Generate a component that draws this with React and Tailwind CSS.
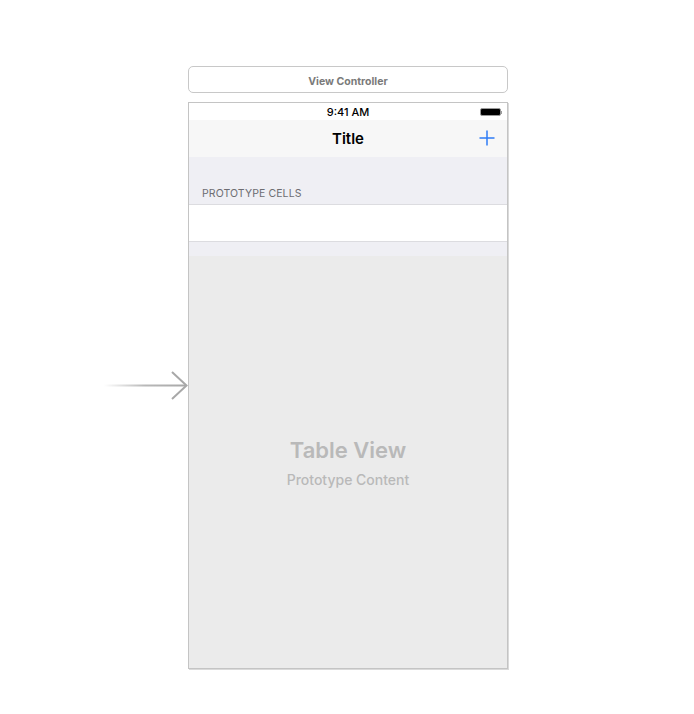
export default function App() {
  const font = { fontFamily: "Inter, 'Liberation Sans', sans-serif" };
  return (
    <div className="relative w-[694px] h-[714px] bg-white overflow-hidden" style={font}>
      <svg className="absolute left-[100px] top-[368px]" width="92" height="36" viewBox="0 0 92 36">
        <defs>
          <linearGradient id="ln" gradientUnits="userSpaceOnUse" x1="4" y1="0" x2="86" y2="0">
            <stop offset="0" stopColor="#ffffff" />
            <stop offset="0.5" stopColor="#b8b8b8" />
            <stop offset="1" stopColor="#a8a8a8" />
          </linearGradient>
        </defs>
        <rect x="4" y="16.5" width="82" height="2" fill="url(#ln)" />
        <polyline points="72,4 86.5,17.5 72,31" fill="none" stroke="#a8a8a8" strokeWidth="2" />
      </svg>
      <div className="flex flex-col pt-[66px] pl-[188px]">
        <div className="w-[320px] h-[27px] border border-[#c8c8c8] rounded-[5px] flex items-center justify-center pt-[4px] text-[10.5px] font-bold text-[#7a7a7a]">
          View Controller
        </div>
        <div className="mt-[9px] w-[320px] h-[567px] border border-[#c4c4c4] shadow-[1px_1px_0_#dadada] flex flex-col">
          <div className="h-[17px] bg-white relative flex items-center justify-center pt-[2px]">
            <span className="text-[11px] font-medium text-black leading-none">9:41 AM</span>
            <div className="absolute right-[5px] top-[5px] flex items-center">
              <div className="w-[21px] h-[8px] rounded-[2px] bg-black border border-[#9a9a9a]" />
              <div className="w-[1.5px] h-[3px] bg-[#9a9a9a]" />
            </div>
          </div>
          <div className="h-[37px] bg-[#f7f7f7] relative flex items-center justify-center pt-[2px]">
            <span className="text-[15px] font-semibold text-black">Title</span>
            <svg className="absolute right-[12px] top-[10px]" width="16" height="16" viewBox="0 0 16 16">
              <path d="M8 0.5V15.5M0.5 8H15.5" stroke="#2f7cf6" strokeWidth="1.5" />
            </svg>
          </div>
          <div className="h-[47px] bg-[#efeff4] flex items-end px-[13px] pb-[2px]">
            <span className="text-[10.5px] text-[#6d6d72] tracking-[0.1px]">PROTOTYPE CELLS</span>
          </div>
          <div className="h-[38px] bg-white border-y border-[#dcdce0]" />
          <div className="h-[14px] bg-[#efeff4]" />
          <div className="flex-1 bg-[#ebebeb] flex flex-col items-center justify-center pt-[2px]">
            <span className="text-[22px] font-semibold text-[#b9b9b9] leading-[26px]">Table View</span>
            <span className="mt-[8px] text-[14px] font-medium text-[#b9b9b9] leading-[18px]">Prototype Content</span>
          </div>
        </div>
      </div>
    </div>
  );
}
